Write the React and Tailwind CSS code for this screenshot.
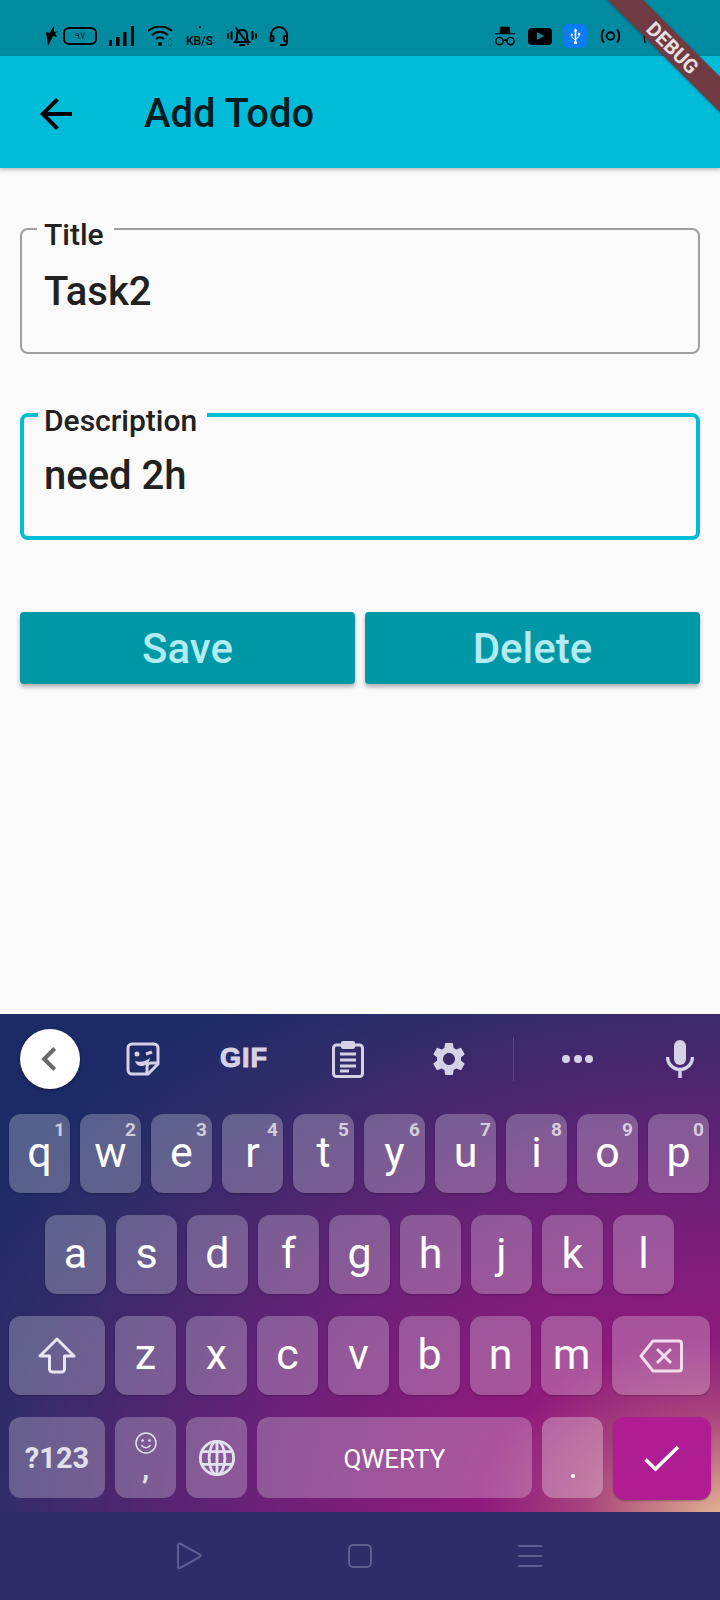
import React from 'react';

const Key = ({ label, sup, className = 'w-[61px]', children }) => (
    <div className={`relative flex h-full items-center justify-center rounded-xl bg-white/25 shadow-[0_1px_2px_rgba(0,0,0,0.25)] ${className}`}>
        {label && <span className="relative top-[-1px] text-[43px] leading-none text-white">{label}</span>}
        {sup && <span className="absolute right-[5px] top-[6px] text-[19px] font-bold leading-none text-white/70">{sup}</span>}
        {children}
    </div>
);

const Ico = ({ className, children, viewBox = '0 0 24 24' }) => (
    <svg viewBox={viewBox} className={className}>{children}</svg>
);

const StatusBar = () => (
    <div className="flex h-[56px] items-center bg-[#008ba1] pl-[46px] pt-[16px] text-black">
        <Ico viewBox="0 0 13 20" className="h-[20px] w-[13px]"><path d="M8 0 3.500 7 0 6l2 14 5-10 4 1-2-4 4-2-5 1z" /></Ico>
        <div className="ml-[4px] flex h-[18px] w-[34px] items-center justify-center rounded-[6px] border-2 border-black font-['DejaVu_Sans',sans-serif] text-[10px] leading-none text-black/70">٩٧</div>
        <Ico viewBox="0 0 25 20" className="ml-[12px] h-[20px] w-[25px]">
            <rect x="0" y="14" width="3" height="6" /><rect x="7" y="11" width="3.500" height="9" /><rect x="14" y="6" width="3.500" height="14" /><rect x="22" y="0" width="3" height="20" />
        </Ico>
        <Ico viewBox="0 0 25 21" className="ml-[14px] h-[21px] w-[25px]">
            <g fill="none" stroke="black" strokeWidth="2"><path d="M0 5c7-6 17-6 24 0" /><path d="M4 9c5-4 11-4 16 0" /><path d="M8 13c2.500-2 5.500-2 8 0" /></g>
            <circle cx="12" cy="18" r="2" />
            <path d="m20 15 2-2 2 2M20 18l2 2 2-2" fill="none" stroke="#00616f" strokeWidth="1" />
        </Ico>
        <div className="ml-[13px] flex w-[27px] flex-col items-center leading-none">
            <span className="h-[2px] w-[2px] rounded-full bg-black" />
            <span className="mt-[7px] whitespace-nowrap font-['Roboto',sans-serif] text-[12px] font-medium leading-none">KB/S</span>
        </div>
        <Ico viewBox="0 0 30 20" className="ml-[14px] h-[20px] w-[30px]">
            <g fill="none" stroke="black" strokeWidth="2" strokeLinecap="round">
                <path d="M8 16h14l-2-3V9c0-3-2-5-5-5s-5 2-5 5v4z" /><path d="m9 2 12 16" /><path d="M13 19h4" />
                <path d="M1 8v4M4.500 6v7M25.500 6v7M29 8v4" />
            </g>
        </Ico>
        <Ico viewBox="0 0 20 20" className="ml-[12px] h-[20px] w-[20px]">
            <g fill="none" stroke="black" strokeWidth="2"><path d="M2 11V9a8 8 0 0 1 16 0v7c0 2-1 3-3 3h-4" /><rect x="1.500" y="10" width="3" height="5" rx="1" /><rect x="15" y="10" width="3" height="5" rx="1" /></g>
        </Ico>
        <Ico viewBox="0 0 24 22" className="ml-[205px] h-[22px] w-[22px]">
            <path d="M7 1h10l1 7h5v1H1V8h5z" />
            <g fill="none" stroke="black" strokeWidth="1.600"><circle cx="6" cy="16.500" r="4" /><circle cx="18" cy="16.500" r="4" /><path d="M10 16c1.500-1 2.500-1 4 0" /></g>
        </Ico>
        <div className="ml-[12px] flex h-[17px] w-[24px] items-center justify-center rounded-[4px] bg-black">
            <div className="h-0 w-0 border-y-[4px] border-l-[7px] border-y-transparent border-l-[#008ba1]" />
        </div>
        <div className="ml-[11px] flex h-[24px] w-[24px] items-center justify-center rounded-[5px] bg-[#0a7cf5]">
            <Ico viewBox="0 0 14 20" className="h-[16px] w-[11px]">
                <path d="M7 0 4.500 4H6v10L3 11.500V9.500H4V7H1v2.500h1v2.500l4 3.500V17a2 2 0 1 0 2 0v-3l4-3V9h1V6h-3v3h1v1.500L8 13V4h1.500z" fill="white" />
            </Ico>
        </div>
        <Ico viewBox="0 0 22 16" className="ml-[13px] h-[16px] w-[21px]">
            <g fill="none" stroke="black" strokeWidth="2"><circle cx="11" cy="8" r="4" /><path d="M4 1C1 5 1 11 4 15M18 1c3 4 3 10 0 14" /></g>
        </Ico>
        <Ico viewBox="0 0 32 18" className="ml-[22px] h-[18px] w-[31px]">
            <g fill="none" stroke="black" strokeWidth="1.500"><path d="M2 2c-1 5-1 9 0 14" /><circle cx="25" cy="9" r="5" /></g>
            <circle cx="9" cy="11" r="2" />
        </Ico>
    </div>
);

const Field = ({ label, value, focused }) => (
    <fieldset className={`h-[140px] rounded-[8px] ${focused ? 'border-4 border-[#00bcd4] pl-[14px]' : 'border-2 border-[#9e9e9e] pl-[15px]'}`}>
        <legend className={`pr-[10px] text-[30px] font-medium leading-[30px] ${focused ? 'pl-[6px]' : 'pl-[7px]'}`}>
            <span className="relative top-[6px] block">{label}</span>
        </legend>
        <div className={`text-[40px] font-medium leading-[50px] ${focused ? 'pl-[6px] pt-[21px]' : 'pl-[7px] pt-[23px]'}`}>{value}</div>
    </fieldset>
);

const Btn = ({ children }) => (
    <div className="flex h-[72px] flex-1 items-center justify-center rounded-[4px] bg-[#0097a7] text-[42px] font-medium text-[#b2ebf2] shadow-[0_3px_4px_rgba(0,0,0,0.3)]">{children}</div>
);

const Toolbar = () => (
    <div className="flex h-[100px] items-center pb-[11px] pl-[20px]">
        <div className="flex h-[60px] w-[60px] items-center justify-center rounded-full bg-white shadow-[0_1px_3px_rgba(0,0,0,0.4)]">
            <Ico className="h-[28px] w-[28px]"><path d="M16 3 7 12l9 9" fill="none" stroke="#6b6b6b" strokeWidth="3.500" /></Ico>
        </div>
        <Ico viewBox="0 0 34 34" className="ml-[46px] h-[34px] w-[34px]">
            <path d="M6 2h22a4 4 0 0 1 4 4v16L22 32H6a4 4 0 0 1-4-4V6a4 4 0 0 1 4-4z" fill="none" stroke="#d6d2e6" strokeWidth="3" />
            <path d="M21 32v-7a4 4 0 0 1 4-4h7" fill="none" stroke="#d6d2e6" strokeWidth="3" />
            <circle cx="11" cy="12" r="2.500" fill="#d6d2e6" /><path d="M20 12l6-2" stroke="#d6d2e6" strokeWidth="3" />
            <path d="M9 19c6 2 11 0 15-3-1 6-5 8-8 8-4 0-6-2-7-5z" fill="#d6d2e6" />
        </Ico>
        <span className="ml-[60px] font-['Liberation_Sans',sans-serif] text-[27px] font-black leading-none tracking-[1px] text-[#d6d2e6] [-webkit-text-stroke:1px_#d6d2e6]">GIF</span>
        <Ico viewBox="0 0 32 38" className="ml-[64px] h-[38px] w-[32px]">
            <rect x="1.500" y="5" width="29" height="31.500" rx="3" fill="none" stroke="#d6d2e6" strokeWidth="3" />
            <rect x="9" y="1" width="14" height="8" rx="2" fill="#d6d2e6" />
            <path d="M8 14h16M8 20h16M8 26h16M8 31h9" stroke="#d6d2e6" strokeWidth="3" />
        </Ico>
        <Ico className="ml-[65px] h-[40px] w-[40px]">
            <path fill="#d6d2e6" d="M19.140 12.940c.04-.3.060-.61.060-.94 0-.32-.02-.64-.07-.94l2.030-1.580c.18-.14.230-.41.120-.61l-1.920-3.320c-.12-.22-.37-.29-.59-.22l-2.390.96c-.5-.38-1.030-.7-1.620-.94l-.36-2.540c-.04-.24-.24-.41-.48-.41h-3.840c-.24 0-.43.170-.47.410l-.36 2.540c-.59.240-1.130.570-1.620.94l-2.390-.96c-.22-.08-.47 0-.59.220L2.740 8.870c-.12.210-.08.470.12.610l2.030 1.580c-.05.3-.09.630-.09.940s.02.640.07.940l-2.030 1.580c-.18.140-.23.410-.12.610l1.920 3.320c.12.220.37.290.59.220l2.390-.96c.5.380 1.030.7 1.620.94l.36 2.540c.05.240.24.410.48.410h3.840c.24 0 .44-.17.470-.41l.36-2.540c.59-.24 1.130-.56 1.620-.94l2.390.96c.22.080.47 0 .59-.22l1.920-3.320c.12-.22.070-.47-.12-.61l-2.010-1.580zM12 15.600c-1.980 0-3.600-1.620-3.600-3.600s1.620-3.600 3.600-3.600 3.600 1.620 3.600 3.600-1.620 3.600-3.600 3.600z" />
        </Ico>
        <div className="ml-[44px] h-[44px] w-px bg-white/15" />
        <div className="ml-[48px] flex gap-[3.500px]">
            <span className="h-[8px] w-[8px] rounded-full bg-[#d6d2e6]" /><span className="h-[8px] w-[8px] rounded-full bg-[#d6d2e6]" /><span className="h-[8px] w-[8px] rounded-full bg-[#d6d2e6]" />
        </div>
        <Ico viewBox="0 0 28 38" className="ml-[73px] h-[38px] w-[28px]">
            <rect x="8" y="0" width="12" height="25" rx="6" fill="#d6d2e6" />
            <path d="M1.500 17a12.500 12.500 0 0 0 25 0M14 30v8" fill="none" stroke="#d6d2e6" strokeWidth="3.500" />
        </Ico>
    </div>
);

const Keyboard = () => (
    <div className="h-[498px] bg-[radial-gradient(ellipse_850px_620px_at_100%_100%,#dfb08f_0%,#a8427c_16%,#8f1a7c_28%,#6f2078_52%,#2f2c69_86%,#1c2b66_102%)] font-['Roboto',sans-serif]">
        <Toolbar />
        <div className="flex flex-col gap-[22px] px-[9px]">
            <div className="flex h-[79px] gap-[10px]">
                {[['q', '1'], ['w', '2'], ['e', '3'], ['r', '4'], ['t', '5'], ['y', '6'], ['u', '7'], ['i', '8'], ['o', '9'], ['p', '0']].map(([l, s]) => (
                    <Key key={l} label={l} sup={s} />
                ))}
            </div>
            <div className="flex h-[79px] gap-[10px] pl-[36px]">
                {['a', 's', 'd', 'f', 'g', 'h', 'j', 'k', 'l'].map(l => <Key key={l} label={l} />)}
            </div>
            <div className="flex h-[79px] gap-[10px]">
                <Key className="w-[96px]">
                    <Ico viewBox="0 0 38 37" className="h-[37px] w-[38px]">
                        <path d="M19 2 2 19h9.500v13a3 3 0 0 0 3 3h9a3 3 0 0 0 3-3V19H36z" fill="none" stroke="#e8e6f0" strokeWidth="3" strokeLinejoin="round" />
                    </Ico>
                </Key>
                {['z', 'x', 'c', 'v', 'b', 'n', 'm'].map(l => <Key key={l} label={l} />)}
                <Key className="w-[98px]">
                    <Ico viewBox="0 0 44 34" className="h-[34px] w-[44px]">
                        <path d="M14 2h26a2.500 2.500 0 0 1 2.500 2.500v25A2.500 2.500 0 0 1 40 32H14L2 17z" fill="none" stroke="#f3dcec" strokeWidth="3" strokeLinejoin="round" />
                        <path d="m18 10 14 14M32 10 18 24" stroke="#f3dcec" strokeWidth="3" />
                    </Ico>
                </Key>
            </div>
            <div className="flex h-[81px] gap-[10px]">
                <div className="flex w-[96px] items-center justify-center rounded-xl bg-white/25 pt-[2px] text-[29px] font-bold text-[#e2e0ee]">?123</div>
                <div className="flex w-[61px] flex-col items-center rounded-xl bg-white/25 pt-[14px]">
                    <Ico className="h-[24px] w-[24px]">
                        <g fill="none" stroke="#e2e0ee" strokeWidth="1.500"><circle cx="12" cy="12" r="10" /><path d="M7.500 14c2 3.500 7 3.500 9 0" /></g>
                        <circle cx="8.500" cy="9.500" r="1.300" fill="#e2e0ee" /><circle cx="15.500" cy="9.500" r="1.300" fill="#e2e0ee" />
                    </Ico>
                    <span className="mt-[-2px] text-[32px] font-medium leading-[30px] text-[#e2e0ee]">,</span>
                </div>
                <div className="flex w-[61px] items-center justify-center rounded-xl bg-white/25">
                    <Ico className="h-[38px] w-[38px]">
                        <g fill="none" stroke="#e2e0ee" strokeWidth="1.800"><circle cx="12" cy="12" r="10.500" /><ellipse cx="12" cy="12" rx="5" ry="10.500" /><path d="M12 1.500v21M2.500 8h19M2.500 16h19" /></g>
                    </Ico>
                </div>
                <div className="flex w-[275px] items-center justify-center rounded-xl bg-white/25 pt-[3px] text-[26px] text-white">QWERTY</div>
                <div className="flex w-[61px] items-end justify-center rounded-xl bg-white/30 pb-[20px]"><span className="h-[4px] w-[4px] rounded-full bg-white" /></div>
                <div className="flex h-[83px] w-[98px] items-center justify-center rounded-xl bg-[#b01c92] shadow-[0_1px_2px_rgba(0,0,0,0.25)]">
                    <Ico viewBox="0 0 36 28" className="h-[28px] w-[36px]"><path d="M1.500 14.500 11.500 24 34 2" fill="none" stroke="white" strokeWidth="3.500" /></Ico>
                </div>
            </div>
        </div>
    </div>
);

const NavBar = () => (
    <div className="flex h-[88px] items-center bg-[#2f2c69] pb-[1px]">
        <Ico viewBox="0 0 26 28" className="ml-[176px] h-[28px] w-[26px]"><path d="M2 3a1.500 1.500 0 0 1 2-1.500l20 11a1.500 1.500 0 0 1 0 2.500l-20 11A1.500 1.500 0 0 1 2 25z" fill="none" stroke="#5f5e92" strokeWidth="2" /></Ico>
        <div className="ml-[146px] h-[24px] w-[24px] rounded-[5px] border-2 border-[#5f5e92]" />
        <div className="ml-[146px] flex w-[24px] flex-col gap-[8px]">
            <span className="h-[2px] bg-[#5f5e92]" /><span className="h-[2px] bg-[#5f5e92]" /><span className="h-[2px] bg-[#5f5e92]" />
        </div>
    </div>
);

const App = () => (
    <div className="relative flex h-[1600px] w-[720px] flex-col overflow-hidden bg-[#fafafa] font-['Roboto',sans-serif] text-[#212121]">
        <StatusBar />
        <div className="z-10 flex h-[112px] items-center bg-[#00bcd9] pl-[32px] pt-[4px] text-[#000000de] shadow-[0_2px_4px_rgba(0,0,0,0.25)]">
            <Ico className="h-[48px] w-[48px]"><path d="M20 11H7.830l5.590-5.590L12 4l-8 8 8 8 1.410-1.410L7.830 13H20v-2z" fill="black" /></Ico>
            <span className="ml-[64px] text-[40px] font-medium leading-none">Add Todo</span>
        </div>
        <div className="flex flex-1 flex-col px-[20px] pt-[46px]">
            <div className="flex flex-col gap-[46px]">
                <Field label="Title" value="Task2" />
                <Field label="Description" value="need 2h" focused />
            </div>
            <div className="mt-[72px] flex gap-[10px]">
                <Btn>Save</Btn>
                <Btn>Delete</Btn>
            </div>
        </div>
        <Keyboard />
        <NavBar />
        <div className="absolute left-[573px] top-[35px] z-20 flex h-[25px] w-[200px] rotate-45 items-center justify-center bg-[#703a42] text-[20px] font-bold text-[#e8e0e0] shadow-[0_1px_3px_rgba(0,0,0,0.3)]">DEBUG</div>
    </div>
);

export default App;
